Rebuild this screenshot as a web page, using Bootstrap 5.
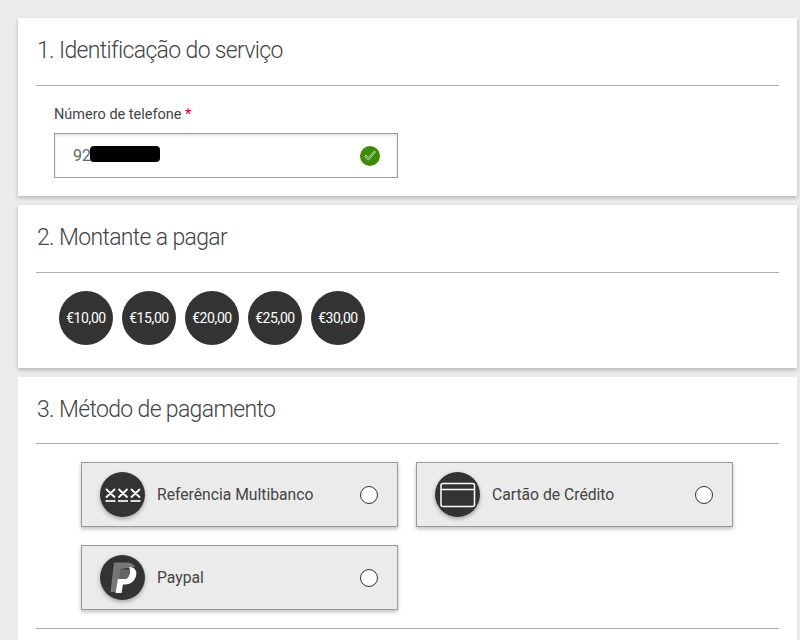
<!DOCTYPE html>
<html lang="pt">
<head>
  <meta charset="UTF-8">
  <meta name="viewport" content="width=device-width, initial-scale=1">
  <title>Carregamento</title>
  <link href="https://cdn.jsdelivr.net/npm/bootstrap@5.3.0/dist/css/bootstrap.min.css" rel="stylesheet">
  <style>
    html, body { height: 640px; overflow: hidden; }
    body { background: #ebebeb; font-family: Roboto, "Liberation Sans", sans-serif; color: #333; padding: 18px 3px 0 18px; }
    .pay-section { background: #fff; padding: 0 18px; margin-bottom: 9px; box-shadow: 0 2px 4px rgba(0,0,0,.22); border: 0; border-radius: 0; }
    .pay-section-last { padding-bottom: 11px; margin-bottom: 0; box-shadow: none; }
    .pay-title { font-family: Roboto, sans-serif; font-weight: 300; font-size: 23px; letter-spacing: -.65px; line-height: 30px; margin: 0; padding: 18px 0 19px 1px; color: #444; }
    .pay-title-short { padding-bottom: 18px; }
    .pay-rule { margin: 0; border: 0; border-top: 1px solid #adadad; opacity: 1; }
    .phone-label { font-size: 14.5px; line-height: 20px; margin: 19px 0 8px 18px; color: #444; display: block; }
    .phone-label b { color: #e60000; font-weight: 400; }
    .phone-box { width: 344px; height: 45px; margin: 0 0 18px 18px; }
    .phone-box .form-control { height: 45px; border: 1px solid #999; border-radius: 0; padding: 0 18px; font-size: 16px; color: #666; box-shadow: inset 0 2px 3px rgba(0,0,0,.1); }
    .redacted { position: absolute; left: 36px; top: 13px; width: 70px; height: 16px; background: #000; border-radius: 4px; }
    .ok-icon { position: absolute; right: 18px; top: 13px; width: 20px; height: 20px; }
    .amounts { gap: 9px; padding: 18px 0 23px 23px; }
    .amount { width: 54px; height: 54px; border-radius: 50%; background: #333; color: #fff; font-size: 14px; letter-spacing: -.4px; }
    .methods { gap: 18px; padding: 18px 0; margin-left: 45px; }
    .method { width: 317px; height: 65px; background: #ebebeb; border: 1px solid #999; padding: 0 19px 0 18px; box-shadow: 0 2px 4px rgba(0,0,0,.25); }
    .method-icon { width: 45px; height: 45px; margin-right: 12px; flex: none; filter: drop-shadow(0 2px 2px rgba(0,0,0,.3)); }
    .method-name { font-size: 15.7px; color: #444; }
    .method .form-check-input { width: 18px; height: 18px; margin: 0; border: 1px solid #333; background-color: #fff; flex: none; }
  </style>
</head>
<body>

  <div class="card pay-section">
    <h2 class="pay-title">1. Identificação do serviço</h2>
    <hr class="pay-rule">
    <label class="phone-label" for="phone">Número de telefone <b>*</b></label>
    <div class="phone-box position-relative">
      <input class="form-control" id="phone" type="text" value="92">
      <span class="redacted"></span>
      <svg class="ok-icon" viewBox="0 0 20 20">
        <circle cx="10" cy="10" r="10" fill="#3f8a06"/>
        <path d="M4.5 10.5l1.5-1.500 2.500 2.500 6-6.500 1 1L8.500 14z" fill="#5f9a33" stroke="#d5e6c8" stroke-width=".8"/>
      </svg>
    </div>
  </div>

  <div class="card pay-section">
    <h2 class="pay-title">2. Montante a pagar</h2>
    <hr class="pay-rule">
    <div class="d-flex amounts">
      <div class="amount d-flex align-items-center justify-content-center">€10,00</div>
      <div class="amount d-flex align-items-center justify-content-center">€15,00</div>
      <div class="amount d-flex align-items-center justify-content-center">€20,00</div>
      <div class="amount d-flex align-items-center justify-content-center">€25,00</div>
      <div class="amount d-flex align-items-center justify-content-center">€30,00</div>
    </div>
  </div>

  <div class="card pay-section pay-section-last">
    <h2 class="pay-title pay-title-short">3. Método de pagamento</h2>
    <hr class="pay-rule">
    <div class="d-flex flex-wrap methods">
      <div class="method d-flex align-items-center">
        <svg class="method-icon" viewBox="0 0 45 45">
          <circle cx="22.500" cy="22.500" r="22.500" fill="#333"/>
          <path d="M6 17l9 8.500M15 17l-9 8.500M18.500 17l9 8.500M27.500 17l-9 8.500M31 17l9 8.500M40 17l-9 8.500" stroke="#fff" stroke-width="1.800" fill="none"/>
          <path d="M5.500 29h10M18 29h10M30.500 29h10" stroke="#ddd" stroke-width="1.800" fill="none"/>
        </svg>
        <span class="method-name flex-grow-1">Referência Multibanco</span>
        <input class="form-check-input" type="radio" name="method">
      </div>
      <div class="method d-flex align-items-center">
        <svg class="method-icon" viewBox="0 0 45 45">
          <circle cx="22.500" cy="22.500" r="22.500" fill="#333"/>
          <rect x="6" y="11.500" width="33.500" height="23" rx="2" fill="none" stroke="#fff" stroke-width="1.500"/>
          <path d="M6 17.500h33.500" stroke="#fff" stroke-width="1.500"/>
        </svg>
        <span class="method-name flex-grow-1">Cartão de Crédito</span>
        <input class="form-check-input" type="radio" name="method">
      </div>
      <div class="method d-flex align-items-center">
        <svg class="method-icon" viewBox="0 0 45 45">
          <circle cx="22.500" cy="22.500" r="22.500" fill="#333"/>
          <path d="M14 7.500H27C31 7.500 34 9 35 12L21 14 17 37H10.500Z" fill="#777"/>
          <path d="M29 12C35 12 37.500 16 36 21 34.500 27 30 29.500 24 29.500H23L21.500 38H15.500L18 24H24C27 24 29 22 29.500 19 30 16 30 14 29 12Z" fill="#fff"/>
          <path d="M20.500 14.500H29C30 16 30 18 29.500 19 29 22 27 24 24 24H18.500Z" fill="#666"/>
        </svg>
        <span class="method-name flex-grow-1">Paypal</span>
        <input class="form-check-input" type="radio" name="method">
      </div>
    </div>
    <hr class="pay-rule">
  </div>

  <script src="https://cdn.jsdelivr.net/npm/bootstrap@5.3.0/dist/js/bootstrap.bundle.min.js"></script>
</body>
</html>
